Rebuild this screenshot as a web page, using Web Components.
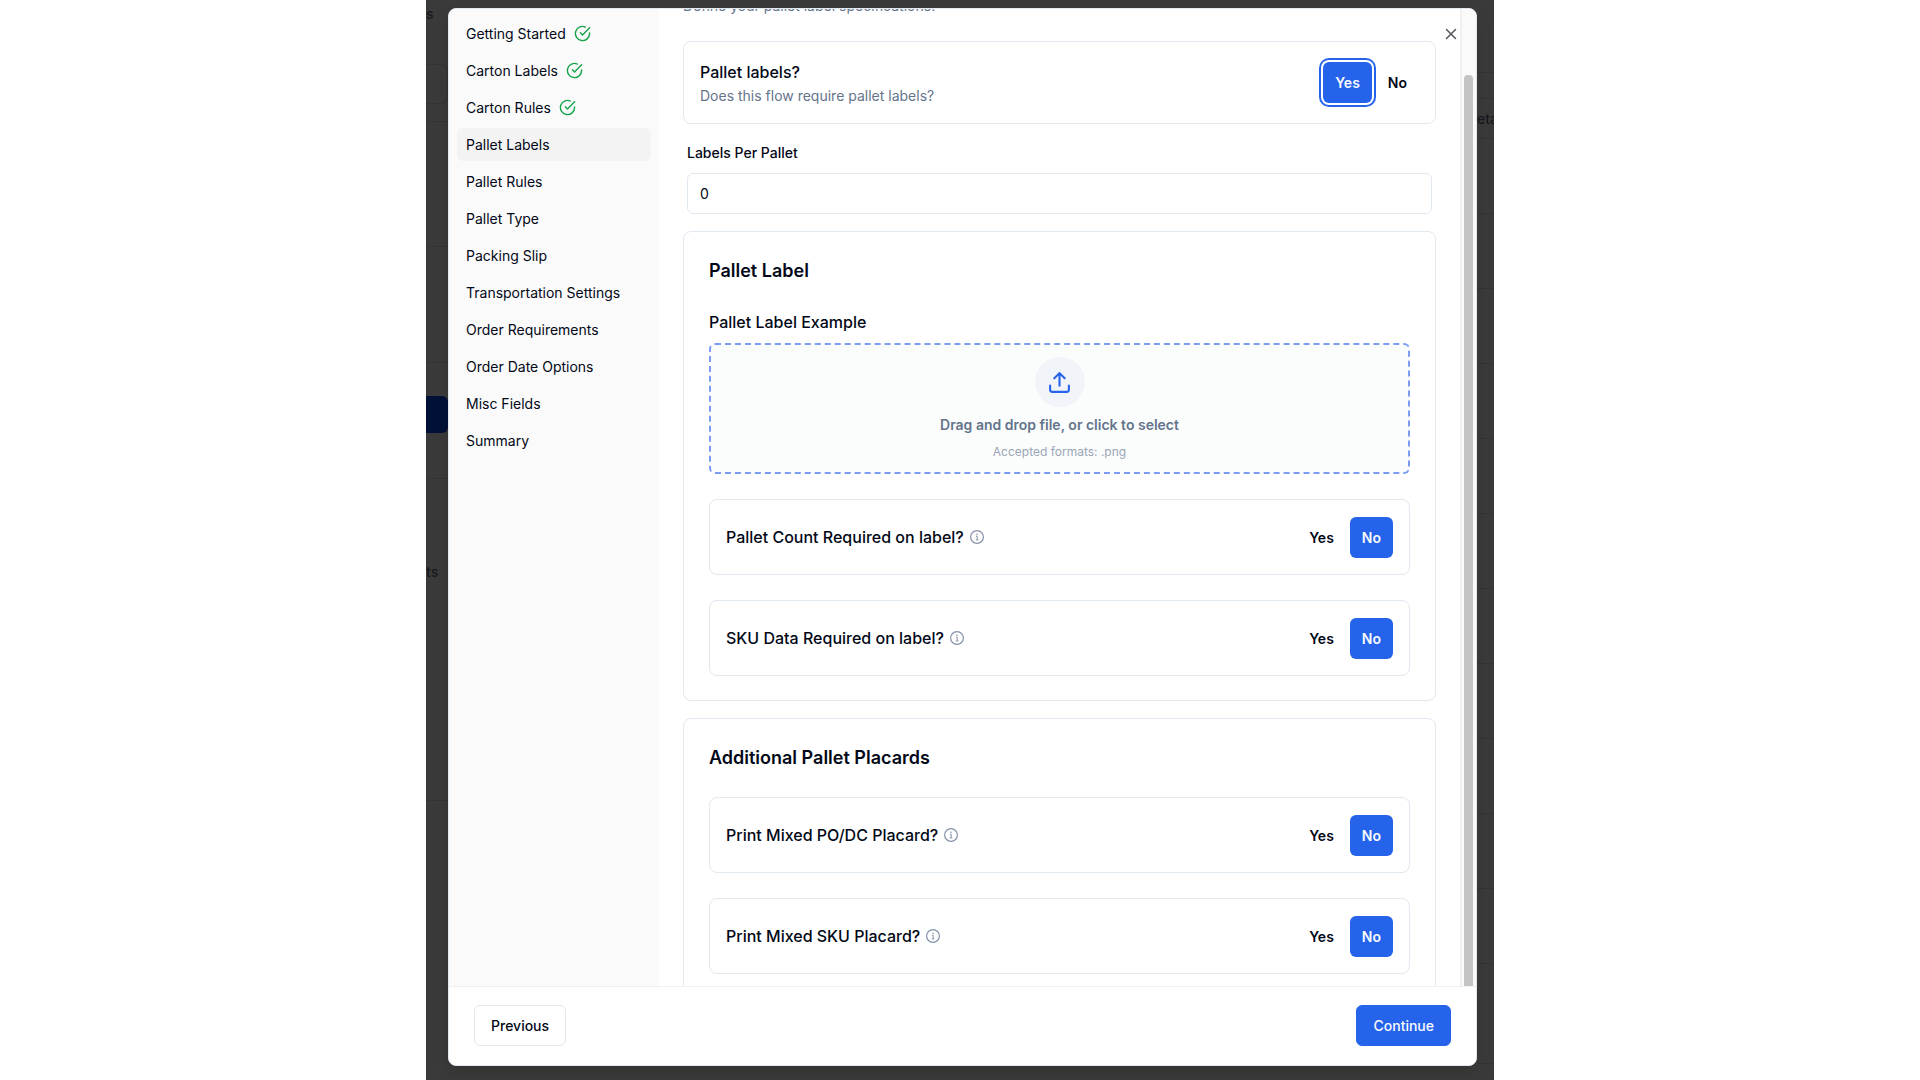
<!DOCTYPE html>
<html lang="en">
<head>
  <meta charset="utf-8">
  <meta name="viewport" content="width=device-width, initial-scale=1">
  <title>Pallet Labels</title>
  <style>
    body {
      margin: 0;
      background: #fff;
      color: #020817;
      font-family: Inter, "Liberation Sans", sans-serif;
      font-size: 14px;
      --border: #e2e8f0;
      --primary: #2563eb;
      --muted: #64748b;
    }
  </style>
</head>
<body>
  <flow-stage>
    <page-strip slot="left">
      <strip-row size="64">s</strip-row>
      <strip-row size="40" kind="box"></strip-row>
      <strip-row size="18" kind="line"></strip-row>
      <strip-row size="125" kind="line"></strip-row>
      <strip-row size="116" kind="line"></strip-row>
      <strip-row size="33"></strip-row>
      <strip-row size="37" kind="fill"></strip-row>
      <strip-row size="46" kind="line"></strip-row>
      <strip-row size="82"></strip-row>
      <strip-row size="22" kind="text">ts</strip-row>
      <strip-row size="218" kind="line"></strip-row>
    </page-strip>

    <flow-dialog>
      <step-list slot="steps">
        <step-item done>Getting Started</step-item>
        <step-item done>Carton Labels</step-item>
        <step-item done>Carton Rules</step-item>
        <step-item current>Pallet Labels</step-item>
        <step-item>Pallet Rules</step-item>
        <step-item>Pallet Type</step-item>
        <step-item>Packing Slip</step-item>
        <step-item>Transportation Settings</step-item>
        <step-item>Order Requirements</step-item>
        <step-item>Order Date Options</step-item>
        <step-item>Misc Fields</step-item>
        <step-item>Summary</step-item>
      </step-list>

      <span slot="description">Define your pallet label specifications.</span>
      <yes-no-row label="Pallet labels?" hint="Does this flow require pallet labels?" value="yes" ring></yes-no-row>
      <number-field label="Labels Per Pallet" value="0"></number-field>
      <section-card heading="Pallet Label">
        <file-drop label="Pallet Label Example" accept=".png"></file-drop>
        <yes-no-row label="Pallet Count Required on label?" value="no" info></yes-no-row>
        <yes-no-row label="SKU Data Required on label?" value="no" info></yes-no-row>
      </section-card>
      <section-card heading="Additional Pallet Placards">
        <yes-no-row label="Print Mixed PO/DC Placard?" value="no" info></yes-no-row>
        <yes-no-row label="Print Mixed SKU Placard?" value="no" info></yes-no-row>
      </section-card>

      <action-button slot="footer" variant="outline">Previous</action-button>
      <action-button slot="footer">Continue</action-button>
    </flow-dialog>

    <page-strip slot="right">
      <strip-row size="73" kind="line"></strip-row>
      <strip-row size="26" kind="line"></strip-row>
      <strip-row size="40" kind="text line">eta</strip-row>
      <strip-row size="75" kind="line"></strip-row>
      <strip-row size="75" kind="line"></strip-row>
      <strip-row size="75" kind="line"></strip-row>
      <strip-row size="75" kind="line"></strip-row>
      <strip-row size="75" kind="line"></strip-row>
      <strip-row size="75" kind="line"></strip-row>
      <strip-row size="75" kind="line"></strip-row>
      <strip-row size="75" kind="line"></strip-row>
      <strip-row size="75" kind="line"></strip-row>
      <strip-row size="75" kind="line"></strip-row>
      <strip-row size="75" kind="line"></strip-row>
      <strip-row size="100" kind="line"></strip-row>
    </page-strip>
  </flow-stage>

  <script>
    // Attach an open shadow root and fill it
    function render(host, html) {
      const shadow = host.attachShadow({ mode: 'open' });
      shadow.innerHTML = html;
      return shadow;
    }

    // Dimmed page with the dialog in the middle
    class FlowStage extends HTMLElement {
      constructor() {
        super();
        render(this, `
          <style>
            :host {
              display: grid;
              grid-template-columns: 426fr 1068fr 426fr;
              height: 100vh;
            }
            .page {
              grid-column: 2;
              display: grid;
              grid-template-columns: 22px minmax(0, 1fr) 17px;
              min-height: 0;
              overflow: hidden;
              background: #3a3a3a;
            }
            .center {
              display: grid;
              min-height: 0;
              padding: 8px 0 14px;
            }
          </style>
          <div class="page">
            <slot name="left"></slot>
            <div class="center"><slot></slot></div>
            <slot name="right"></slot>
          </div>
        `);
      }
    }

    // Visible edge of the page behind the dialog
    class PageStrip extends HTMLElement {
      constructor() {
        super();
        render(this, `
          <style>
            :host {
              display: flex;
              flex-direction: column;
              min-width: 0;
              overflow: hidden;
              color: #16181d;
            }
          </style>
          <slot></slot>
        `);
      }
    }

    class StripRow extends HTMLElement {
      constructor() {
        super();
        render(this, `
          <style>
            :host {
              display: block;
              box-sizing: border-box;
              flex: none;
              font-weight: 500;
              line-height: 28px;
              white-space: nowrap;
            }
            :host([kind~="text"]) {
              display: flex;
              align-items: center;
            }
            :host([kind~="line"]) {
              border-bottom: 1px solid #323335;
            }
            :host([kind="box"]) {
              border: 1px solid #323335;
              border-left: 0;
              border-radius: 0 6px 6px 0;
            }
            :host([kind="fill"]) {
              background: #001036;
              border-radius: 0 6px 6px 0;
            }
          </style>
          <slot></slot>
        `);
      }

      connectedCallback() {
        this.style.height = this.getAttribute('size') + 'px';
      }
    }

    class FlowDialog extends HTMLElement {
      constructor() {
        super();
        render(this, `
          <style>
            :host {
              position: relative;
              display: grid;
              grid-template-rows: minmax(0, 1fr) auto;
              min-width: 0;
              min-height: 0;
              overflow: hidden;
              background: #fff;
              border: 1px solid var(--border);
              border-radius: 8px;
              box-shadow: 0 8px 16px rgba(0, 0, 0, 0.1);
            }
            .body {
              display: grid;
              grid-template-columns: 210px minmax(0, 1fr) 16px;
              min-height: 0;
            }
            .scroller {
              overflow-y: auto;
              scrollbar-width: none;
              padding: 0 24px 24px;
            }
            .content {
              display: flex;
              flex-direction: column;
              gap: 17px;
            }
            .description {
              margin: 0 0 8px;
              color: var(--muted);
              line-height: 20px;
            }
            .track {
              display: flex;
              box-sizing: border-box;
              padding: 66px 3px 0 2px;
              background: #fafafa;
              border-left: 2px solid #f0f0f0;
              overflow: hidden;
            }
            .thumb {
              flex: 1;
              background: #c4c4c4;
              border-radius: 4px 4px 0 0;
            }
            footer {
              display: flex;
              justify-content: space-between;
              padding: 18px 25px 19px;
              border-top: 1px solid #f0f0f0;
            }
            .close {
              position: absolute;
              top: 16px;
              right: 16px;
              display: flex;
              padding: 0;
              border: 0;
              background: none;
              color: #54565c;
              cursor: pointer;
            }
          </style>
          <div class="body">
            <slot name="steps"></slot>
            <div class="scroller">
              <div class="content">
                <p class="description"><slot name="description"></slot></p>
                <slot></slot>
              </div>
            </div>
            <div class="track"><div class="thumb"></div></div>
          </div>
          <footer><slot name="footer"></slot></footer>
          <button class="close" type="button" aria-label="Close">
            <svg width="18" height="18" viewBox="0 0 24 24" fill="none" stroke="currentColor" stroke-width="2" stroke-linecap="round">
              <path d="M18 6 6 18M6 6l12 12"/>
            </svg>
          </button>
        `);
      }

      scrollContent(top) {
        this.shadowRoot.querySelector('.scroller').scrollTop = top;
      }
    }

    class StepList extends HTMLElement {
      constructor() {
        super();
        render(this, `
          <style>
            :host {
              display: block;
              background: #fafafa;
            }
            nav {
              display: flex;
              flex-direction: column;
              gap: 4px;
              padding: 8px;
            }
          </style>
          <nav aria-label="Steps"><slot></slot></nav>
        `);
      }
    }

    class StepItem extends HTMLElement {
      constructor() {
        super();
        const check = this.hasAttribute('done') ? `
          <svg width="17" height="17" viewBox="0 0 24 24" fill="none" stroke="#16a34a" stroke-width="2" stroke-linecap="round" stroke-linejoin="round">
            <path d="M22 11.08V12a10 10 0 1 1-5.93-9.14"/>
            <path d="m9 11 3 3L22 4"/>
          </svg>` : '';
        render(this, `
          <style>
            :host {
              display: block;
            }
            a {
              display: flex;
              align-items: center;
              gap: 8px;
              height: 33px;
              padding: 0 9px;
              border-radius: 6px;
              color: inherit;
              text-decoration: none;
            }
            a:hover,
            :host([current]) a {
              background: #f3f3f3;
            }
          </style>
          <a href="#"><slot></slot>${check}</a>
        `);
      }
    }

    class ActionButton extends HTMLElement {
      constructor() {
        super();
        render(this, `
          <style>
            :host {
              display: block;
            }
            button {
              height: 41px;
              padding: 0 16px;
              border: 1px solid var(--primary);
              border-radius: 6px;
              background: var(--primary);
              color: #f8fafc;
              font: inherit;
              font-weight: 500;
              cursor: pointer;
            }
            :host([variant="outline"]) button {
              border-color: var(--border);
              background: #fff;
              color: inherit;
            }
          </style>
          <button type="button"><slot></slot></button>
        `);
      }
    }

    class SectionCard extends HTMLElement {
      constructor() {
        super();
        render(this, `
          <style>
            :host {
              display: block;
              padding: 25px 25px 24px;
              border: 1px solid var(--border);
              border-radius: 8px;
            }
            h2 {
              margin: 0 0 25px;
              font-size: 18px;
              font-weight: 600;
              line-height: 28px;
            }
            .items {
              display: flex;
              flex-direction: column;
              gap: 25px;
            }
          </style>
          <h2>${this.getAttribute('heading')}</h2>
          <div class="items"><slot></slot></div>
        `);
      }
    }

    class YesNoRow extends HTMLElement {
      constructor() {
        super();
        const hint = this.getAttribute('hint');
        const info = this.hasAttribute('info') ? `
          <svg width="16" height="16" viewBox="0 0 16 16" fill="none" stroke="#8492a8">
            <circle cx="8" cy="8" r="6.4" stroke-width="1.2"/>
            <path d="M7 7.2h1.2v3.6M6.8 10.9h2.6" stroke-width="1"/>
            <circle cx="8" cy="5.2" r=".8" fill="#8492a8" stroke="none"/>
          </svg>` : '';
        const shadow = render(this, `
          <style>
            :host {
              display: flex;
              align-items: center;
              justify-content: space-between;
              min-height: 42px;
              padding: 16px;
              border: 1px solid var(--border);
              border-radius: 8px;
            }
            :host([hint]) {
              min-height: 49px;
            }
            .title {
              display: flex;
              align-items: center;
              gap: 5px;
              font-size: 16px;
              font-weight: 500;
              line-height: 24px;
            }
            .hint {
              margin: 2px 0 0;
              color: var(--muted);
              line-height: 20px;
            }
            .choices {
              display: flex;
              gap: 4px;
            }
            button {
              height: 41px;
              padding: 0 12px;
              border: 0;
              border-radius: 6px;
              background: none;
              color: inherit;
              font: inherit;
              font-weight: 600;
              cursor: pointer;
            }
            button[aria-pressed="true"] {
              background: var(--primary);
              color: #f8fafc;
            }
            :host([ring]) button[aria-pressed="true"] {
              box-shadow: 0 0 0 2px #fff, 0 0 0 4px var(--primary);
            }
          </style>
          <div>
            <div class="title" id="title">${this.getAttribute('label')}${info}</div>
            ${hint ? `<p class="hint">${hint}</p>` : ''}
          </div>
          <div class="choices" role="group" aria-labelledby="title">
            <button type="button" value="yes">Yes</button>
            <button type="button" value="no">No</button>
          </div>
        `);

        shadow.querySelectorAll('button').forEach((button) => {
          button.addEventListener('click', () => this.select(button.value));
        });
        this.select(this.getAttribute('value'));
      }

      select(value) {
        this.shadowRoot.querySelectorAll('button').forEach((button) => {
          button.setAttribute('aria-pressed', String(button.value === value));
        });
      }
    }

    class NumberField extends HTMLElement {
      constructor() {
        super();
        render(this, `
          <style>
            :host {
              display: flex;
              flex-direction: column;
              gap: 8px;
              padding: 0 4px;
            }
            label {
              font-weight: 500;
              line-height: 24px;
            }
            input {
              box-sizing: border-box;
              width: 100%;
              height: 41px;
              padding: 0 12px;
              border: 1px solid var(--border);
              border-radius: 6px;
              background: #fff;
              color: inherit;
              font: inherit;
            }
          </style>
          <label for="field">${this.getAttribute('label')}</label>
          <input id="field" type="text" inputmode="numeric" value="${this.getAttribute('value')}">
        `);
      }
    }

    class FileDrop extends HTMLElement {
      constructor() {
        super();
        const accept = this.getAttribute('accept');
        render(this, `
          <style>
            :host {
              display: block;
            }
            .title {
              margin-bottom: 9px;
              font-size: 16px;
              font-weight: 500;
              line-height: 24px;
            }
            .zone {
              position: relative;
              display: flex;
              flex-direction: column;
              align-items: center;
              gap: 8px;
              padding: 12px;
              border: 2px dashed #7c9cf3;
              border-radius: 6px;
              background: #fbfdfd;
              cursor: pointer;
            }
            .icon {
              display: grid;
              place-items: center;
              width: 50px;
              height: 50px;
              border-radius: 50%;
              background: #f1f4f9;
            }
            .prompt {
              color: var(--muted);
              font-weight: 600;
              line-height: 20px;
            }
            .formats {
              color: #9aa5b5;
              font-size: 12px;
              line-height: 17px;
            }
            input {
              position: absolute;
              inset: 0;
              width: 100%;
              opacity: 0;
              cursor: pointer;
            }
          </style>
          <div class="title">${this.getAttribute('label')}</div>
          <label class="zone" for="file">
            <span class="icon">
              <svg width="25" height="25" viewBox="0 0 24 24" fill="none" stroke="#2563eb" stroke-width="2" stroke-linecap="round" stroke-linejoin="round">
                <path d="M21 15v4a2 2 0 0 1-2 2H5a2 2 0 0 1-2-2v-4"/>
                <path d="m17 8-5-5-5 5M12 3v12"/>
              </svg>
            </span>
            <span class="prompt">Drag and drop file, or click to select</span>
            <span class="formats">Accepted formats: ${accept}</span>
            <input id="file" type="file" accept="${accept}">
          </label>
        `);
      }
    }

    // Define the custom elements
    customElements.define('flow-stage', FlowStage);
    customElements.define('page-strip', PageStrip);
    customElements.define('strip-row', StripRow);
    customElements.define('flow-dialog', FlowDialog);
    customElements.define('step-list', StepList);
    customElements.define('step-item', StepItem);
    customElements.define('action-button', ActionButton);
    customElements.define('section-card', SectionCard);
    customElements.define('yes-no-row', YesNoRow);
    customElements.define('number-field', NumberField);
    customElements.define('file-drop', FileDrop);

    document.querySelector('flow-dialog').scrollContent(13);
  </script>
</body>
</html>
